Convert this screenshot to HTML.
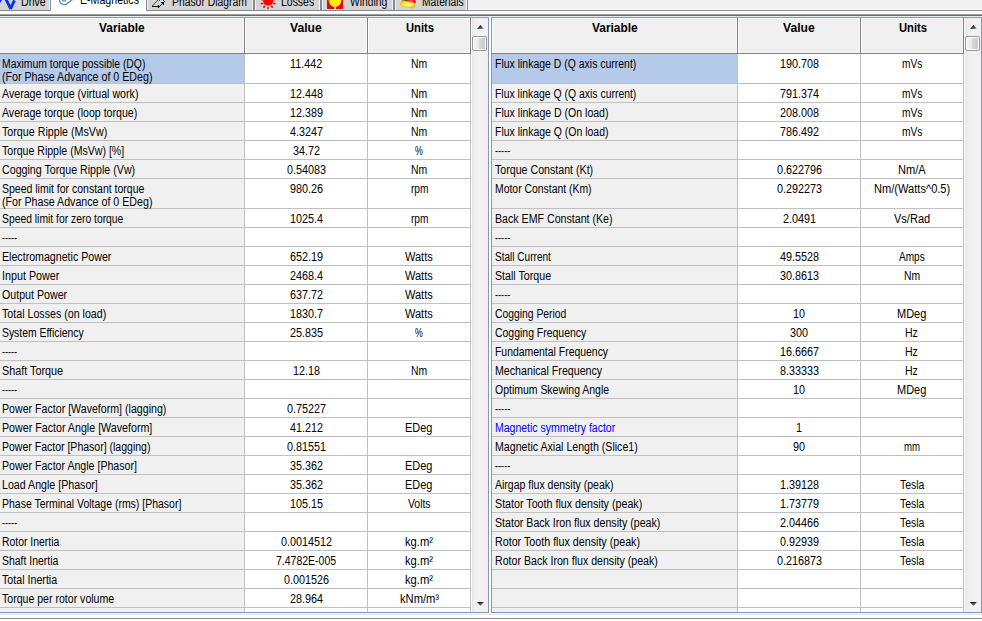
<!DOCTYPE html>
<html><head><meta charset="utf-8"><title>E-Magnetics</title>
<style>
html,body{margin:0;padding:0}
body{width:982px;height:621px;position:relative;overflow:hidden;background:#fff;font-family:"Liberation Sans", sans-serif;}
#p{position:absolute;left:0;top:0;width:982px;height:621px;overflow:hidden}
#p>div,#p>svg,#p>span{position:absolute;display:block}
.t,.h{white-space:pre;transform-origin:0 0;color:#000;line-height:20px;margin-top:-14px;font-size:12.5px}
.h{font-weight:bold;font-size:12.0px}
</style></head><body><div id="p">
<div style="left:0px;top:0px;width:982px;height:9px;background:#f0f0f0;"></div>
<div style="left:0px;top:9px;width:982px;height:1px;background:#fff;"></div>
<div style="left:0px;top:10px;width:982px;height:1px;background:#868a96;"></div>
<div style="left:0px;top:11px;width:982px;height:3px;background:#fff;"></div>
<div style="left:0px;top:14px;width:982px;height:1px;background:#a0a0a0;"></div>
<div style="left:0px;top:15px;width:982px;height:1px;background:#696969;"></div>
<div style="left:0px;top:16px;width:982px;height:1px;background:#eaebec;"></div>
<div style="left:0px;top:613px;width:982px;height:1px;background:#f5f5f5;"></div>
<div style="left:0px;top:614px;width:982px;height:1px;background:#e7e7e7;"></div>
<div style="left:0px;top:615px;width:982px;height:3px;background:#fff;"></div>
<div style="left:0px;top:618px;width:982px;height:1px;background:#868a96;"></div>
<div style="left:0px;top:619px;width:982px;height:2px;background:#fff;"></div>
<div style="left:0px;top:17px;width:489px;height:1px;background:#7f9db9;"></div>
<div style="left:488px;top:17px;width:1px;height:596px;background:#7f9db9;"></div>
<div style="left:0px;top:612px;width:489px;height:1px;background:#7f9db9;"></div>
<div style="left:491px;top:17px;width:491px;height:1px;background:#7f9db9;"></div>
<div style="left:491px;top:17px;width:1px;height:596px;background:#7f9db9;"></div>
<div style="left:981px;top:17px;width:1px;height:596px;background:#7f9db9;"></div>
<div style="left:491px;top:612px;width:491px;height:1px;background:#7f9db9;"></div>
<div style="left:489px;top:17px;width:2px;height:596px;background:#fff;"></div>
<div style="left:0px;top:18px;width:471px;height:35px;background:#f0f0f0;"></div>
<div style="left:0px;top:18px;width:471px;height:1px;background:#fff;"></div>
<div style="left:0px;top:52px;width:471px;height:1px;background:#f8f8f8;"></div>
<div style="left:243px;top:19px;width:1px;height:34px;background:#f8f8f8;"></div>
<div style="left:244px;top:18px;width:1px;height:36px;background:#808080;"></div>
<div style="left:245px;top:18px;width:1px;height:35px;background:#fff;"></div>
<div style="left:366px;top:19px;width:1px;height:34px;background:#f8f8f8;"></div>
<div style="left:367px;top:18px;width:1px;height:36px;background:#808080;"></div>
<div style="left:368px;top:18px;width:1px;height:35px;background:#fff;"></div>
<div style="left:469px;top:19px;width:1px;height:34px;background:#f8f8f8;"></div>
<div style="left:470px;top:18px;width:1px;height:36px;background:#808080;"></div>
<div style="left:0px;top:53px;width:471px;height:1px;background:#808080;"></div>
<span class="h" style="left:99.00px;top:32px;transform:scaleX(0.9923)">Variable</span>
<span class="h" style="left:290.00px;top:32px;transform:scaleX(1.0101)">Value</span>
<span class="h" style="left:406.25px;top:32px;transform:scaleX(0.9332)">Units</span>
<div style="left:0px;top:54px;width:244px;height:29px;background:#b5caea;"></div>
<div style="left:245px;top:54px;width:225px;height:29px;background:#fff;"></div>
<div style="left:0px;top:83px;width:471px;height:1px;background:#c0c0c0;"></div>
<span class="t" style="left:1.80px;top:68px;transform:scaleX(0.8287);">Maximum torque possible (DQ)</span>
<span class="t" style="left:1.80px;top:81px;transform:scaleX(0.8525);">(For Phase Advance of 0 EDeg)</span>
<span class="t" style="left:290.28px;top:68px;transform:scaleX(0.8631)">11.442</span>
<span class="t" style="left:410.82px;top:68px;transform:scaleX(0.8321)">Nm</span>
<div style="left:0px;top:84px;width:244px;height:18px;background:#f0f0f0;"></div>
<div style="left:245px;top:84px;width:225px;height:18px;background:#fff;"></div>
<div style="left:0px;top:102px;width:471px;height:1px;background:#c0c0c0;"></div>
<span class="t" style="left:1.80px;top:98px;transform:scaleX(0.8514);">Average torque (virtual work)</span>
<span class="t" style="left:289.88px;top:98px;transform:scaleX(0.8631)">12.448</span>
<span class="t" style="left:410.82px;top:98px;transform:scaleX(0.8321)">Nm</span>
<div style="left:0px;top:103px;width:244px;height:18px;background:#f0f0f0;"></div>
<div style="left:245px;top:103px;width:225px;height:18px;background:#fff;"></div>
<div style="left:0px;top:121px;width:471px;height:1px;background:#c0c0c0;"></div>
<span class="t" style="left:1.80px;top:117px;transform:scaleX(0.8474);">Average torque (loop torque)</span>
<span class="t" style="left:289.88px;top:117px;transform:scaleX(0.8631)">12.389</span>
<span class="t" style="left:410.82px;top:117px;transform:scaleX(0.8321)">Nm</span>
<div style="left:0px;top:122px;width:244px;height:18px;background:#f0f0f0;"></div>
<div style="left:245px;top:122px;width:225px;height:18px;background:#fff;"></div>
<div style="left:0px;top:140px;width:471px;height:1px;background:#c0c0c0;"></div>
<span class="t" style="left:1.80px;top:136px;transform:scaleX(0.8559);">Torque Ripple (MsVw)</span>
<span class="t" style="left:289.88px;top:136px;transform:scaleX(0.8631)">4.3247</span>
<span class="t" style="left:410.82px;top:136px;transform:scaleX(0.8321)">Nm</span>
<div style="left:0px;top:141px;width:244px;height:18px;background:#f0f0f0;"></div>
<div style="left:245px;top:141px;width:225px;height:18px;background:#fff;"></div>
<div style="left:0px;top:159px;width:471px;height:1px;background:#c0c0c0;"></div>
<span class="t" style="left:1.80px;top:155px;transform:scaleX(0.8457);">Torque Ripple (MsVw) [%]</span>
<span class="t" style="left:292.88px;top:155px;transform:scaleX(0.8631)">34.72</span>
<span class="t" style="left:415.30px;top:155px;transform:scaleX(0.7000)">%</span>
<div style="left:0px;top:160px;width:244px;height:18px;background:#f0f0f0;"></div>
<div style="left:245px;top:160px;width:225px;height:18px;background:#fff;"></div>
<div style="left:0px;top:178px;width:471px;height:1px;background:#c0c0c0;"></div>
<span class="t" style="left:1.80px;top:174px;transform:scaleX(0.8529);">Cogging Torque Ripple (Vw)</span>
<span class="t" style="left:286.88px;top:174px;transform:scaleX(0.8631)">0.54083</span>
<span class="t" style="left:410.82px;top:174px;transform:scaleX(0.8321)">Nm</span>
<div style="left:0px;top:179px;width:244px;height:29px;background:#f0f0f0;"></div>
<div style="left:245px;top:179px;width:225px;height:29px;background:#fff;"></div>
<div style="left:0px;top:208px;width:471px;height:1px;background:#c0c0c0;"></div>
<span class="t" style="left:1.80px;top:193px;transform:scaleX(0.8397);">Speed limit for constant torque</span>
<span class="t" style="left:1.80px;top:206px;transform:scaleX(0.8525);">(For Phase Advance of 0 EDeg)</span>
<span class="t" style="left:289.88px;top:193px;transform:scaleX(0.8631)">980.26</span>
<span class="t" style="left:410.60px;top:193px;transform:scaleX(0.8099)">rpm</span>
<div style="left:0px;top:209px;width:244px;height:18px;background:#f0f0f0;"></div>
<div style="left:245px;top:209px;width:225px;height:18px;background:#fff;"></div>
<div style="left:0px;top:227px;width:471px;height:1px;background:#c0c0c0;"></div>
<span class="t" style="left:1.80px;top:223px;transform:scaleX(0.8278);">Speed limit for zero torque</span>
<span class="t" style="left:289.88px;top:223px;transform:scaleX(0.8631)">1025.4</span>
<span class="t" style="left:410.60px;top:223px;transform:scaleX(0.8099)">rpm</span>
<div style="left:0px;top:228px;width:244px;height:18px;background:#f0f0f0;"></div>
<div style="left:245px;top:228px;width:225px;height:18px;background:#fff;"></div>
<div style="left:0px;top:246px;width:471px;height:1px;background:#c0c0c0;"></div>
<span class="t" style="left:1.80px;top:242px;transform:scaleX(0.7215);">-----</span>
<div style="left:0px;top:247px;width:244px;height:18px;background:#f0f0f0;"></div>
<div style="left:245px;top:247px;width:225px;height:18px;background:#fff;"></div>
<div style="left:0px;top:265px;width:471px;height:1px;background:#c0c0c0;"></div>
<span class="t" style="left:1.80px;top:261px;transform:scaleX(0.8507);">Electromagnetic Power</span>
<span class="t" style="left:289.88px;top:261px;transform:scaleX(0.8631)">652.19</span>
<span class="t" style="left:405.40px;top:261px;transform:scaleX(0.8805)">Watts</span>
<div style="left:0px;top:266px;width:244px;height:18px;background:#f0f0f0;"></div>
<div style="left:245px;top:266px;width:225px;height:18px;background:#fff;"></div>
<div style="left:0px;top:284px;width:471px;height:1px;background:#c0c0c0;"></div>
<span class="t" style="left:1.80px;top:280px;transform:scaleX(0.8596);">Input Power</span>
<span class="t" style="left:289.88px;top:280px;transform:scaleX(0.8631)">2468.4</span>
<span class="t" style="left:405.40px;top:280px;transform:scaleX(0.8805)">Watts</span>
<div style="left:0px;top:285px;width:244px;height:18px;background:#f0f0f0;"></div>
<div style="left:245px;top:285px;width:225px;height:18px;background:#fff;"></div>
<div style="left:0px;top:303px;width:471px;height:1px;background:#c0c0c0;"></div>
<span class="t" style="left:1.80px;top:299px;transform:scaleX(0.8523);">Output Power</span>
<span class="t" style="left:289.88px;top:299px;transform:scaleX(0.8631)">637.72</span>
<span class="t" style="left:405.40px;top:299px;transform:scaleX(0.8805)">Watts</span>
<div style="left:0px;top:304px;width:244px;height:18px;background:#f0f0f0;"></div>
<div style="left:245px;top:304px;width:225px;height:18px;background:#fff;"></div>
<div style="left:0px;top:322px;width:471px;height:1px;background:#c0c0c0;"></div>
<span class="t" style="left:1.80px;top:318px;transform:scaleX(0.8524);">Total Losses (on load)</span>
<span class="t" style="left:289.88px;top:318px;transform:scaleX(0.8631)">1830.7</span>
<span class="t" style="left:405.40px;top:318px;transform:scaleX(0.8805)">Watts</span>
<div style="left:0px;top:323px;width:244px;height:18px;background:#f0f0f0;"></div>
<div style="left:245px;top:323px;width:225px;height:18px;background:#fff;"></div>
<div style="left:0px;top:341px;width:471px;height:1px;background:#c0c0c0;"></div>
<span class="t" style="left:1.80px;top:337px;transform:scaleX(0.8299);">System Efficiency</span>
<span class="t" style="left:289.88px;top:337px;transform:scaleX(0.8631)">25.835</span>
<span class="t" style="left:415.30px;top:337px;transform:scaleX(0.7000)">%</span>
<div style="left:0px;top:342px;width:244px;height:18px;background:#f0f0f0;"></div>
<div style="left:245px;top:342px;width:225px;height:18px;background:#fff;"></div>
<div style="left:0px;top:360px;width:471px;height:1px;background:#c0c0c0;"></div>
<span class="t" style="left:1.80px;top:356px;transform:scaleX(0.7215);">-----</span>
<div style="left:0px;top:361px;width:244px;height:18px;background:#f0f0f0;"></div>
<div style="left:245px;top:361px;width:225px;height:18px;background:#fff;"></div>
<div style="left:0px;top:379px;width:471px;height:1px;background:#c0c0c0;"></div>
<span class="t" style="left:1.80px;top:375px;transform:scaleX(0.8643);">Shaft Torque</span>
<span class="t" style="left:292.88px;top:375px;transform:scaleX(0.8631)">12.18</span>
<span class="t" style="left:410.82px;top:375px;transform:scaleX(0.8321)">Nm</span>
<div style="left:0px;top:380px;width:244px;height:18px;background:#f0f0f0;"></div>
<div style="left:245px;top:380px;width:225px;height:18px;background:#fff;"></div>
<div style="left:0px;top:398px;width:471px;height:1px;background:#c0c0c0;"></div>
<span class="t" style="left:1.80px;top:394px;transform:scaleX(0.7215);">-----</span>
<div style="left:0px;top:399px;width:244px;height:18px;background:#f0f0f0;"></div>
<div style="left:245px;top:399px;width:225px;height:18px;background:#fff;"></div>
<div style="left:0px;top:417px;width:471px;height:1px;background:#c0c0c0;"></div>
<span class="t" style="left:1.80px;top:413px;transform:scaleX(0.8500);">Power Factor [Waveform] (lagging)</span>
<span class="t" style="left:286.88px;top:413px;transform:scaleX(0.8631)">0.75227</span>
<div style="left:0px;top:418px;width:244px;height:18px;background:#f0f0f0;"></div>
<div style="left:245px;top:418px;width:225px;height:18px;background:#fff;"></div>
<div style="left:0px;top:436px;width:471px;height:1px;background:#c0c0c0;"></div>
<span class="t" style="left:1.80px;top:432px;transform:scaleX(0.8541);">Power Factor Angle [Waveform]</span>
<span class="t" style="left:289.88px;top:432px;transform:scaleX(0.8631)">41.212</span>
<span class="t" style="left:405.03px;top:432px;transform:scaleX(0.8741)">EDeg</span>
<div style="left:0px;top:437px;width:244px;height:18px;background:#f0f0f0;"></div>
<div style="left:245px;top:437px;width:225px;height:18px;background:#fff;"></div>
<div style="left:0px;top:455px;width:471px;height:1px;background:#c0c0c0;"></div>
<span class="t" style="left:1.80px;top:451px;transform:scaleX(0.8412);">Power Factor [Phasor] (lagging)</span>
<span class="t" style="left:286.88px;top:451px;transform:scaleX(0.8631)">0.81551</span>
<div style="left:0px;top:456px;width:244px;height:18px;background:#f0f0f0;"></div>
<div style="left:245px;top:456px;width:225px;height:18px;background:#fff;"></div>
<div style="left:0px;top:474px;width:471px;height:1px;background:#c0c0c0;"></div>
<span class="t" style="left:1.80px;top:470px;transform:scaleX(0.8480);">Power Factor Angle [Phasor]</span>
<span class="t" style="left:289.88px;top:470px;transform:scaleX(0.8631)">35.362</span>
<span class="t" style="left:405.03px;top:470px;transform:scaleX(0.8741)">EDeg</span>
<div style="left:0px;top:475px;width:244px;height:18px;background:#f0f0f0;"></div>
<div style="left:245px;top:475px;width:225px;height:18px;background:#fff;"></div>
<div style="left:0px;top:493px;width:471px;height:1px;background:#c0c0c0;"></div>
<span class="t" style="left:1.80px;top:489px;transform:scaleX(0.8510);">Load Angle [Phasor]</span>
<span class="t" style="left:289.88px;top:489px;transform:scaleX(0.8631)">35.362</span>
<span class="t" style="left:405.03px;top:489px;transform:scaleX(0.8741)">EDeg</span>
<div style="left:0px;top:494px;width:244px;height:18px;background:#f0f0f0;"></div>
<div style="left:245px;top:494px;width:225px;height:18px;background:#fff;"></div>
<div style="left:0px;top:512px;width:471px;height:1px;background:#c0c0c0;"></div>
<span class="t" style="left:1.80px;top:508px;transform:scaleX(0.8389);">Phase Terminal Voltage (rms) [Phasor]</span>
<span class="t" style="left:289.88px;top:508px;transform:scaleX(0.8631)">105.15</span>
<span class="t" style="left:408.00px;top:508px;transform:scaleX(0.8306)">Volts</span>
<div style="left:0px;top:513px;width:244px;height:18px;background:#f0f0f0;"></div>
<div style="left:245px;top:513px;width:225px;height:18px;background:#fff;"></div>
<div style="left:0px;top:531px;width:471px;height:1px;background:#c0c0c0;"></div>
<span class="t" style="left:1.80px;top:527px;transform:scaleX(0.7215);">-----</span>
<div style="left:0px;top:532px;width:244px;height:18px;background:#f0f0f0;"></div>
<div style="left:245px;top:532px;width:225px;height:18px;background:#fff;"></div>
<div style="left:0px;top:550px;width:471px;height:1px;background:#c0c0c0;"></div>
<span class="t" style="left:1.80px;top:546px;transform:scaleX(0.8325);">Rotor Inertia</span>
<span class="t" style="left:280.88px;top:546px;transform:scaleX(0.8631)">0.0014512</span>
<span class="t" style="left:405.20px;top:546px;transform:scaleX(0.8975)">kg.m²</span>
<div style="left:0px;top:551px;width:244px;height:18px;background:#f0f0f0;"></div>
<div style="left:245px;top:551px;width:225px;height:18px;background:#fff;"></div>
<div style="left:0px;top:569px;width:471px;height:1px;background:#c0c0c0;"></div>
<span class="t" style="left:1.80px;top:565px;transform:scaleX(0.8362);">Shaft Inertia</span>
<span class="t" style="left:276.35px;top:565px;transform:scaleX(0.8390)">7.4782E-005</span>
<span class="t" style="left:405.20px;top:565px;transform:scaleX(0.8975)">kg.m²</span>
<div style="left:0px;top:570px;width:244px;height:18px;background:#f0f0f0;"></div>
<div style="left:245px;top:570px;width:225px;height:18px;background:#fff;"></div>
<div style="left:0px;top:588px;width:471px;height:1px;background:#c0c0c0;"></div>
<span class="t" style="left:1.80px;top:584px;transform:scaleX(0.8536);">Total Inertia</span>
<span class="t" style="left:283.88px;top:584px;transform:scaleX(0.8631)">0.001526</span>
<span class="t" style="left:405.20px;top:584px;transform:scaleX(0.8975)">kg.m²</span>
<div style="left:0px;top:589px;width:244px;height:18px;background:#f0f0f0;"></div>
<div style="left:245px;top:589px;width:225px;height:18px;background:#fff;"></div>
<div style="left:0px;top:607px;width:471px;height:1px;background:#c0c0c0;"></div>
<span class="t" style="left:1.80px;top:603px;transform:scaleX(0.8452);">Torque per rotor volume</span>
<span class="t" style="left:289.88px;top:603px;transform:scaleX(0.8631)">28.964</span>
<span class="t" style="left:399.70px;top:603px;transform:scaleX(0.8927)">kNm/m³</span>
<div style="left:0px;top:608px;width:244px;height:4px;background:#f0f0f0;"></div>
<div style="left:245px;top:608px;width:225px;height:4px;background:#fff;"></div>
<div style="left:244px;top:54px;width:1px;height:558px;background:#c0c0c0;"></div>
<div style="left:367px;top:54px;width:1px;height:558px;background:#c0c0c0;"></div>
<div style="left:470px;top:54px;width:1px;height:558px;background:#c0c0c0;"></div>
<div style="left:471px;top:18px;width:17px;height:594px;background:linear-gradient(to right,#ffffff 0,#ffffff 1px,#e6e6e6 1px,#efefef 4px,#f2f2f2 60%,#f0f0f0 100%);"></div>
<div style="left:472px;top:36px;width:13px;height:13px;border:1px solid #979797;border-radius:2px;background:linear-gradient(to right,#f5f5f5 0,#e9e9eb 46%,#d9dadc 47%,#c9cace 85%,#dcdcde 100%);box-shadow:inset 0 0 0 1px #fbfbfb"></div>
<svg style="left:477px;top:25px" width="7" height="4" viewBox="0 0 7 4"><defs><linearGradient id="ga477" x1="0" y1="0" x2="1" y2="1"><stop offset="0.3" stop-color="#101010"/><stop offset="1" stop-color="#b0b0b0"/></linearGradient></defs><path d="M0 4 L3.5 0 L7 4 Z" fill="url(#ga477)"/></svg>
<svg style="left:477px;top:602px" width="7" height="4" viewBox="0 0 7 4"><defs><linearGradient id="gb477" x1="0" y1="0" x2="0.6" y2="1"><stop offset="0.2" stop-color="#101010"/><stop offset="1" stop-color="#a0a0a0"/></linearGradient></defs><path d="M0 0 L7 0 L3.5 4 Z" fill="url(#gb477)"/></svg>
<div style="left:492px;top:18px;width:472px;height:35px;background:#f0f0f0;"></div>
<div style="left:492px;top:18px;width:472px;height:1px;background:#fff;"></div>
<div style="left:492px;top:52px;width:472px;height:1px;background:#f8f8f8;"></div>
<div style="left:492px;top:18px;width:1px;height:35px;background:#fff;"></div>
<div style="left:736px;top:19px;width:1px;height:34px;background:#f8f8f8;"></div>
<div style="left:737px;top:18px;width:1px;height:36px;background:#808080;"></div>
<div style="left:738px;top:18px;width:1px;height:35px;background:#fff;"></div>
<div style="left:859px;top:19px;width:1px;height:34px;background:#f8f8f8;"></div>
<div style="left:860px;top:18px;width:1px;height:36px;background:#808080;"></div>
<div style="left:861px;top:18px;width:1px;height:35px;background:#fff;"></div>
<div style="left:962px;top:19px;width:1px;height:34px;background:#f8f8f8;"></div>
<div style="left:963px;top:18px;width:1px;height:36px;background:#808080;"></div>
<div style="left:492px;top:53px;width:472px;height:1px;background:#808080;"></div>
<span class="h" style="left:591.50px;top:32px;transform:scaleX(0.9923)">Variable</span>
<span class="h" style="left:783.00px;top:32px;transform:scaleX(1.0101)">Value</span>
<span class="h" style="left:899.25px;top:32px;transform:scaleX(0.9332)">Units</span>
<div style="left:492px;top:54px;width:245px;height:29px;background:#b5caea;"></div>
<div style="left:738px;top:54px;width:225px;height:29px;background:#fff;"></div>
<div style="left:492px;top:83px;width:472px;height:1px;background:#c0c0c0;"></div>
<span class="t" style="left:494.80px;top:68px;transform:scaleX(0.8373);">Flux linkage D (Q axis current)</span>
<span class="t" style="left:779.88px;top:68px;transform:scaleX(0.8631)">190.708</span>
<span class="t" style="left:902.05px;top:68px;transform:scaleX(0.8162)">mVs</span>
<div style="left:492px;top:84px;width:245px;height:18px;background:#f0f0f0;"></div>
<div style="left:738px;top:84px;width:225px;height:18px;background:#fff;"></div>
<div style="left:492px;top:102px;width:472px;height:1px;background:#c0c0c0;"></div>
<span class="t" style="left:494.80px;top:98px;transform:scaleX(0.8339);">Flux linkage Q (Q axis current)</span>
<span class="t" style="left:779.88px;top:98px;transform:scaleX(0.8631)">791.374</span>
<span class="t" style="left:902.05px;top:98px;transform:scaleX(0.8162)">mVs</span>
<div style="left:492px;top:103px;width:245px;height:18px;background:#f0f0f0;"></div>
<div style="left:738px;top:103px;width:225px;height:18px;background:#fff;"></div>
<div style="left:492px;top:121px;width:472px;height:1px;background:#c0c0c0;"></div>
<span class="t" style="left:494.80px;top:117px;transform:scaleX(0.8417);">Flux linkage D (On load)</span>
<span class="t" style="left:779.88px;top:117px;transform:scaleX(0.8631)">208.008</span>
<span class="t" style="left:902.05px;top:117px;transform:scaleX(0.8162)">mVs</span>
<div style="left:492px;top:122px;width:245px;height:18px;background:#f0f0f0;"></div>
<div style="left:738px;top:122px;width:225px;height:18px;background:#fff;"></div>
<div style="left:492px;top:140px;width:472px;height:1px;background:#c0c0c0;"></div>
<span class="t" style="left:494.80px;top:136px;transform:scaleX(0.8373);">Flux linkage Q (On load)</span>
<span class="t" style="left:779.88px;top:136px;transform:scaleX(0.8631)">786.492</span>
<span class="t" style="left:902.05px;top:136px;transform:scaleX(0.8162)">mVs</span>
<div style="left:492px;top:141px;width:245px;height:18px;background:#f0f0f0;"></div>
<div style="left:738px;top:141px;width:225px;height:18px;background:#fff;"></div>
<div style="left:492px;top:159px;width:472px;height:1px;background:#c0c0c0;"></div>
<span class="t" style="left:494.80px;top:155px;transform:scaleX(0.7312);">-----</span>
<div style="left:492px;top:160px;width:245px;height:18px;background:#f0f0f0;"></div>
<div style="left:738px;top:160px;width:225px;height:18px;background:#fff;"></div>
<div style="left:492px;top:178px;width:472px;height:1px;background:#c0c0c0;"></div>
<span class="t" style="left:494.80px;top:174px;transform:scaleX(0.8509);">Torque Constant (Kt)</span>
<span class="t" style="left:776.88px;top:174px;transform:scaleX(0.8631)">0.622796</span>
<span class="t" style="left:897.62px;top:174px;transform:scaleX(0.8831)">Nm/A</span>
<div style="left:492px;top:179px;width:245px;height:29px;background:#f0f0f0;"></div>
<div style="left:738px;top:179px;width:225px;height:29px;background:#fff;"></div>
<div style="left:492px;top:208px;width:472px;height:1px;background:#c0c0c0;"></div>
<span class="t" style="left:494.80px;top:193px;transform:scaleX(0.8322);">Motor Constant (Km)</span>
<span class="t" style="left:776.88px;top:193px;transform:scaleX(0.8631)">0.292273</span>
<span class="t" style="left:873.66px;top:193px;transform:scaleX(0.8868)">Nm/(Watts^0.5)</span>
<div style="left:492px;top:209px;width:245px;height:18px;background:#f0f0f0;"></div>
<div style="left:738px;top:209px;width:225px;height:18px;background:#fff;"></div>
<div style="left:492px;top:227px;width:472px;height:1px;background:#c0c0c0;"></div>
<span class="t" style="left:494.80px;top:223px;transform:scaleX(0.8503);">Back EMF Constant (Ke)</span>
<span class="t" style="left:782.88px;top:223px;transform:scaleX(0.8631)">2.0491</span>
<span class="t" style="left:894.05px;top:223px;transform:scaleX(0.8821)">Vs/Rad</span>
<div style="left:492px;top:228px;width:245px;height:18px;background:#f0f0f0;"></div>
<div style="left:738px;top:228px;width:225px;height:18px;background:#fff;"></div>
<div style="left:492px;top:246px;width:472px;height:1px;background:#c0c0c0;"></div>
<span class="t" style="left:494.80px;top:242px;transform:scaleX(0.7312);">-----</span>
<div style="left:492px;top:247px;width:245px;height:18px;background:#f0f0f0;"></div>
<div style="left:738px;top:247px;width:225px;height:18px;background:#fff;"></div>
<div style="left:492px;top:265px;width:472px;height:1px;background:#c0c0c0;"></div>
<span class="t" style="left:494.80px;top:261px;transform:scaleX(0.8043);">Stall Current</span>
<span class="t" style="left:779.88px;top:261px;transform:scaleX(0.8631)">49.5528</span>
<span class="t" style="left:899.40px;top:261px;transform:scaleX(0.8044)">Amps</span>
<div style="left:492px;top:266px;width:245px;height:18px;background:#f0f0f0;"></div>
<div style="left:738px;top:266px;width:225px;height:18px;background:#fff;"></div>
<div style="left:492px;top:284px;width:472px;height:1px;background:#c0c0c0;"></div>
<span class="t" style="left:494.80px;top:280px;transform:scaleX(0.8523);">Stall Torque</span>
<span class="t" style="left:779.88px;top:280px;transform:scaleX(0.8631)">30.8613</span>
<span class="t" style="left:903.82px;top:280px;transform:scaleX(0.8321)">Nm</span>
<div style="left:492px;top:285px;width:245px;height:18px;background:#f0f0f0;"></div>
<div style="left:738px;top:285px;width:225px;height:18px;background:#fff;"></div>
<div style="left:492px;top:303px;width:472px;height:1px;background:#c0c0c0;"></div>
<span class="t" style="left:494.80px;top:299px;transform:scaleX(0.7312);">-----</span>
<div style="left:492px;top:304px;width:245px;height:18px;background:#f0f0f0;"></div>
<div style="left:738px;top:304px;width:225px;height:18px;background:#fff;"></div>
<div style="left:492px;top:322px;width:472px;height:1px;background:#c0c0c0;"></div>
<span class="t" style="left:494.80px;top:318px;transform:scaleX(0.8270);">Cogging Period</span>
<span class="t" style="left:793.38px;top:318px;transform:scaleX(0.8631)">10</span>
<span class="t" style="left:897.02px;top:318px;transform:scaleX(0.8799)">MDeg</span>
<div style="left:492px;top:323px;width:245px;height:18px;background:#f0f0f0;"></div>
<div style="left:738px;top:323px;width:225px;height:18px;background:#fff;"></div>
<div style="left:492px;top:341px;width:472px;height:1px;background:#c0c0c0;"></div>
<span class="t" style="left:494.80px;top:337px;transform:scaleX(0.8366);">Cogging Frequency</span>
<span class="t" style="left:790.38px;top:337px;transform:scaleX(0.8631)">300</span>
<span class="t" style="left:905.41px;top:337px;transform:scaleX(0.8412)">Hz</span>
<div style="left:492px;top:342px;width:245px;height:18px;background:#f0f0f0;"></div>
<div style="left:738px;top:342px;width:225px;height:18px;background:#fff;"></div>
<div style="left:492px;top:360px;width:472px;height:1px;background:#c0c0c0;"></div>
<span class="t" style="left:494.80px;top:356px;transform:scaleX(0.8345);">Fundamental Frequency</span>
<span class="t" style="left:779.88px;top:356px;transform:scaleX(0.8631)">16.6667</span>
<span class="t" style="left:905.41px;top:356px;transform:scaleX(0.8412)">Hz</span>
<div style="left:492px;top:361px;width:245px;height:18px;background:#f0f0f0;"></div>
<div style="left:738px;top:361px;width:225px;height:18px;background:#fff;"></div>
<div style="left:492px;top:379px;width:472px;height:1px;background:#c0c0c0;"></div>
<span class="t" style="left:494.80px;top:375px;transform:scaleX(0.8521);">Mechanical Frequency</span>
<span class="t" style="left:779.88px;top:375px;transform:scaleX(0.8631)">8.33333</span>
<span class="t" style="left:905.41px;top:375px;transform:scaleX(0.8412)">Hz</span>
<div style="left:492px;top:380px;width:245px;height:18px;background:#f0f0f0;"></div>
<div style="left:738px;top:380px;width:225px;height:18px;background:#fff;"></div>
<div style="left:492px;top:398px;width:472px;height:1px;background:#c0c0c0;"></div>
<span class="t" style="left:494.80px;top:394px;transform:scaleX(0.8378);">Optimum Skewing Angle</span>
<span class="t" style="left:793.38px;top:394px;transform:scaleX(0.8631)">10</span>
<span class="t" style="left:897.02px;top:394px;transform:scaleX(0.8799)">MDeg</span>
<div style="left:492px;top:399px;width:245px;height:18px;background:#f0f0f0;"></div>
<div style="left:738px;top:399px;width:225px;height:18px;background:#fff;"></div>
<div style="left:492px;top:417px;width:472px;height:1px;background:#c0c0c0;"></div>
<span class="t" style="left:494.80px;top:413px;transform:scaleX(0.7312);">-----</span>
<div style="left:492px;top:418px;width:245px;height:18px;background:#f0f0f0;"></div>
<div style="left:738px;top:418px;width:225px;height:18px;background:#fff;"></div>
<div style="left:492px;top:436px;width:472px;height:1px;background:#c0c0c0;"></div>
<span class="t" style="left:494.80px;top:432px;transform:scaleX(0.8396);color:#0000ff;">Magnetic symmetry factor</span>
<span class="t" style="left:796.38px;top:432px;transform:scaleX(0.8631)">1</span>
<div style="left:492px;top:437px;width:245px;height:18px;background:#f0f0f0;"></div>
<div style="left:738px;top:437px;width:225px;height:18px;background:#fff;"></div>
<div style="left:492px;top:455px;width:472px;height:1px;background:#c0c0c0;"></div>
<span class="t" style="left:494.80px;top:451px;transform:scaleX(0.8490);">Magnetic Axial Length (Slice1)</span>
<span class="t" style="left:793.38px;top:451px;transform:scaleX(0.8631)">90</span>
<span class="t" style="left:904.35px;top:451px;transform:scaleX(0.7642)">mm</span>
<div style="left:492px;top:456px;width:245px;height:18px;background:#f0f0f0;"></div>
<div style="left:738px;top:456px;width:225px;height:18px;background:#fff;"></div>
<div style="left:492px;top:474px;width:472px;height:1px;background:#c0c0c0;"></div>
<span class="t" style="left:494.80px;top:470px;transform:scaleX(0.7312);">-----</span>
<div style="left:492px;top:475px;width:245px;height:18px;background:#f0f0f0;"></div>
<div style="left:738px;top:475px;width:225px;height:18px;background:#fff;"></div>
<div style="left:492px;top:493px;width:472px;height:1px;background:#c0c0c0;"></div>
<span class="t" style="left:494.80px;top:489px;transform:scaleX(0.8404);">Airgap flux density (peak)</span>
<span class="t" style="left:779.88px;top:489px;transform:scaleX(0.8631)">1.39128</span>
<span class="t" style="left:899.95px;top:489px;transform:scaleX(0.8348)">Tesla</span>
<div style="left:492px;top:494px;width:245px;height:18px;background:#f0f0f0;"></div>
<div style="left:738px;top:494px;width:225px;height:18px;background:#fff;"></div>
<div style="left:492px;top:512px;width:472px;height:1px;background:#c0c0c0;"></div>
<span class="t" style="left:494.80px;top:508px;transform:scaleX(0.8557);">Stator Tooth flux density (peak)</span>
<span class="t" style="left:779.88px;top:508px;transform:scaleX(0.8631)">1.73779</span>
<span class="t" style="left:899.95px;top:508px;transform:scaleX(0.8348)">Tesla</span>
<div style="left:492px;top:513px;width:245px;height:18px;background:#f0f0f0;"></div>
<div style="left:738px;top:513px;width:225px;height:18px;background:#fff;"></div>
<div style="left:492px;top:531px;width:472px;height:1px;background:#c0c0c0;"></div>
<span class="t" style="left:494.80px;top:527px;transform:scaleX(0.8499);">Stator Back Iron flux density (peak)</span>
<span class="t" style="left:779.88px;top:527px;transform:scaleX(0.8631)">2.04466</span>
<span class="t" style="left:899.95px;top:527px;transform:scaleX(0.8348)">Tesla</span>
<div style="left:492px;top:532px;width:245px;height:18px;background:#f0f0f0;"></div>
<div style="left:738px;top:532px;width:225px;height:18px;background:#fff;"></div>
<div style="left:492px;top:550px;width:472px;height:1px;background:#c0c0c0;"></div>
<span class="t" style="left:494.80px;top:546px;transform:scaleX(0.8567);">Rotor Tooth flux density (peak)</span>
<span class="t" style="left:779.88px;top:546px;transform:scaleX(0.8631)">0.92939</span>
<span class="t" style="left:899.95px;top:546px;transform:scaleX(0.8348)">Tesla</span>
<div style="left:492px;top:551px;width:245px;height:18px;background:#f0f0f0;"></div>
<div style="left:738px;top:551px;width:225px;height:18px;background:#fff;"></div>
<div style="left:492px;top:569px;width:472px;height:1px;background:#c0c0c0;"></div>
<span class="t" style="left:494.80px;top:565px;transform:scaleX(0.8492);">Rotor Back Iron flux density (peak)</span>
<span class="t" style="left:776.88px;top:565px;transform:scaleX(0.8631)">0.216873</span>
<span class="t" style="left:899.95px;top:565px;transform:scaleX(0.8348)">Tesla</span>
<div style="left:492px;top:570px;width:245px;height:18px;background:#f0f0f0;"></div>
<div style="left:738px;top:570px;width:225px;height:18px;background:#fff;"></div>
<div style="left:492px;top:588px;width:472px;height:1px;background:#c0c0c0;"></div>
<div style="left:492px;top:589px;width:245px;height:18px;background:#f0f0f0;"></div>
<div style="left:738px;top:589px;width:225px;height:18px;background:#fff;"></div>
<div style="left:492px;top:607px;width:472px;height:1px;background:#c0c0c0;"></div>
<div style="left:492px;top:608px;width:245px;height:4px;background:#f0f0f0;"></div>
<div style="left:738px;top:608px;width:225px;height:4px;background:#fff;"></div>
<div style="left:737px;top:54px;width:1px;height:558px;background:#c0c0c0;"></div>
<div style="left:860px;top:54px;width:1px;height:558px;background:#c0c0c0;"></div>
<div style="left:963px;top:54px;width:1px;height:558px;background:#c0c0c0;"></div>
<div style="left:964px;top:18px;width:17px;height:594px;background:linear-gradient(to right,#ffffff 0,#ffffff 1px,#e6e6e6 1px,#efefef 4px,#f2f2f2 60%,#f0f0f0 100%);"></div>
<div style="left:965px;top:36px;width:13px;height:13px;border:1px solid #979797;border-radius:2px;background:linear-gradient(to right,#f5f5f5 0,#e9e9eb 46%,#d9dadc 47%,#c9cace 85%,#dcdcde 100%);box-shadow:inset 0 0 0 1px #fbfbfb"></div>
<svg style="left:970px;top:25px" width="7" height="4" viewBox="0 0 7 4"><defs><linearGradient id="ga970" x1="0" y1="0" x2="1" y2="1"><stop offset="0.3" stop-color="#101010"/><stop offset="1" stop-color="#b0b0b0"/></linearGradient></defs><path d="M0 4 L3.5 0 L7 4 Z" fill="url(#ga970)"/></svg>
<svg style="left:970px;top:602px" width="7" height="4" viewBox="0 0 7 4"><defs><linearGradient id="gb970" x1="0" y1="0" x2="0.6" y2="1"><stop offset="0.2" stop-color="#101010"/><stop offset="1" stop-color="#a0a0a0"/></linearGradient></defs><path d="M0 0 L7 0 L3.5 4 Z" fill="url(#gb970)"/></svg>
<div style="left:-20px;top:-12px;width:69px;height:21px;border:1px solid #868a96;background:linear-gradient(to bottom,#eaeaea 0,#d8d8d8 2px,#d3d3d3 100%);box-shadow:inset 1px 0 0 #f4f4f4,inset -1px 0 0 #f4f4f4"></div>
<div style="left:146px;top:-12px;width:106px;height:21px;border:1px solid #868a96;background:linear-gradient(to bottom,#eaeaea 0,#d8d8d8 2px,#d3d3d3 100%);box-shadow:inset 1px 0 0 #f4f4f4,inset -1px 0 0 #f4f4f4"></div>
<div style="left:254px;top:-12px;width:65px;height:21px;border:1px solid #868a96;background:linear-gradient(to bottom,#eaeaea 0,#d8d8d8 2px,#d3d3d3 100%);box-shadow:inset 1px 0 0 #f4f4f4,inset -1px 0 0 #f4f4f4"></div>
<div style="left:321px;top:-12px;width:71px;height:21px;border:1px solid #868a96;background:linear-gradient(to bottom,#eaeaea 0,#d8d8d8 2px,#d3d3d3 100%);box-shadow:inset 1px 0 0 #f4f4f4,inset -1px 0 0 #f4f4f4"></div>
<div style="left:394px;top:-12px;width:72px;height:21px;border:1px solid #868a96;background:linear-gradient(to bottom,#eaeaea 0,#d8d8d8 2px,#d3d3d3 100%);box-shadow:inset 1px 0 0 #f4f4f4,inset -1px 0 0 #f4f4f4"></div>
<div style="left:50px;top:0px;width:97px;height:11px;background:#868a96;"></div>
<div style="left:51px;top:0px;width:95px;height:14px;background:#fff;"></div>
<span class="t" style="left:20.85px;top:6px;transform:scaleX(0.8470);">Drive</span>
<span class="t" style="left:79.55px;top:4px;transform:scaleX(0.8487);">E-Magnetics</span>
<span class="t" style="left:172.47px;top:6px;transform:scaleX(0.8290);">Phasor Diagram</span>
<span class="t" style="left:281.46px;top:6px;transform:scaleX(0.8369);">Losses</span>
<span class="t" style="left:349.70px;top:6px;transform:scaleX(0.8229);">Winding</span>
<span class="t" style="left:421.78px;top:6px;transform:scaleX(0.8229);">Materials</span>
<svg style="left:0;top:0" width="20" height="10" viewBox="0 0 20 10"><path d="M-2 3.4 L1.4 -1.5 M5.2 -2.2 L10.6 8.6 L14.4 0.4" fill="none" stroke="#0030ff" stroke-width="2.9" stroke-linejoin="miter" stroke-miterlimit="1.3"/></svg>
<svg style="left:56px;top:0" width="20" height="10" viewBox="0 0 20 10"><path d="M3.4 -1.5 C3.2 2.4 5.6 4.6 8.2 4.6 C10.8 4.6 12.6 2.6 14.8 0.9" fill="none" stroke="#5f93b3" stroke-width="1.4" stroke-linecap="round"/><path d="M6.3 -0.2 C6.9 1.5 9.3 1.5 9.9 -0.2" fill="none" stroke="#5f93b3" stroke-width="1.4"/><rect x="14.2" y="-1" width="2.2" height="1.7" fill="#b25b5b"/></svg>
<svg style="left:148px;top:0" width="20" height="10" viewBox="0 0 20 10" shape-rendering="crispEdges"><g fill="#ff0000"><rect x="4" y="5" width="1" height="1"/><rect x="5" y="4" width="1" height="1"/><rect x="6" y="3" width="1" height="1"/><rect x="7" y="2" width="1" height="1"/><rect x="8" y="1" width="1" height="1"/><rect x="9" y="0" width="1" height="1"/><rect x="11" y="0" width="1" height="1"/></g><g fill="#000"><rect x="4" y="6" width="8" height="1"/><rect x="10" y="5" width="1" height="3"/></g><g fill="#0000d0"><rect x="12" y="5" width="1" height="1"/><rect x="13" y="4" width="1" height="1"/></g><g fill="#000080"><rect x="13" y="2" width="3" height="1"/><rect x="14" y="3" width="2" height="1"/><rect x="15" y="4" width="1" height="1"/></g><g fill="#0000ff"><rect x="16" y="1" width="1" height="1"/><rect x="15" y="0" width="1" height="1"/></g></svg>
<svg style="left:258px;top:0" width="20" height="10" viewBox="0 0 20 10"><circle cx="10.1" cy="0.8" r="5" fill="#ff0000"/><g stroke="#e8101c" stroke-width="1.7" stroke-linecap="round"><path d="M3.5 3.6 L4.6 3.5 M16.7 3.6 L15.6 3.5 M5.9 7.1 L6.7 6.1 M14.2 7.1 L13.4 6.1 M10.05 7.5 L10.05 8.3 M3.9 -0.6 L4.6 -0.2 M16.3 -0.6 L15.6 -0.2"/></g></svg>
<svg style="left:325px;top:0" width="20" height="10" viewBox="0 0 20 10"><rect x="2" y="0" width="16" height="9" fill="#f0000a"/><circle cx="10" cy="0.6" r="6.3" fill="#fff200"/><rect x="9" y="7" width="2" height="2" fill="#b4c4d2"/></svg>
<svg style="left:398px;top:0" width="20" height="10" viewBox="0 0 20 10"><defs><linearGradient id="gy" x1="0" y1="0" x2="1" y2="0.4"><stop offset="0" stop-color="#e8b400"/><stop offset="0.25" stop-color="#fbe000"/><stop offset="0.75" stop-color="#fff690"/><stop offset="1" stop-color="#e8c820"/></linearGradient><linearGradient id="gr" x1="0" y1="0" x2="1" y2="0"><stop offset="0" stop-color="#7a2050"/><stop offset="0.3" stop-color="#b01828"/><stop offset="0.6" stop-color="#f05050"/><stop offset="1" stop-color="#d81820"/></linearGradient></defs><path d="M4 -1 L16 -1 C18.5 0 18.5 3.5 16 4.5 L8 2 Z" fill="url(#gr)"/><rect x="4" y="-1" width="4.2" height="1.6" fill="#283888"/><rect x="2.4" y="1.6" width="14.6" height="5.6" rx="2.8" ry="2.8" transform="rotate(11 9.5 4.5)" fill="url(#gy)" stroke="#d8a800" stroke-width="0.5"/></svg>

</div></body></html>
